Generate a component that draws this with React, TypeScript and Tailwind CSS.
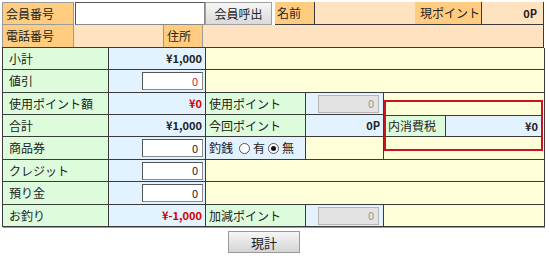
const orange = "bg-[#ffcc80]";
const peach = "bg-[#ffe3c0]";
const green = "bg-[#dcfcdc]";
const blue = "bg-[#e2f2fe]";
const yellow = "bg-[#fefed8]";
const cell = "border-r border-b border-[#3a3a3a] flex items-center";

function Input({ value, red }: { value: string; red?: boolean }) {
  return (
    <div
      className={`w-[61px] h-[18px] bg-white border border-[#8a8a8a] border-t-[#555] border-l-[#555] flex items-center justify-end pr-[4px] text-[11px] ${red ? "text-[#b4284a]" : "text-[#222]"}`}
    >
      {value}
    </div>
  );
}

function Disabled() {
  return (
    <div className="w-[61px] h-[18px] bg-[#e3e3e3] border border-[#b5b5b5] flex items-center justify-end pr-[4px] text-[11px] text-[#999]">
      0
    </div>
  );
}

function Radio({ on }: { on?: boolean }) {
  return (
    <span className="w-[11px] h-[11px] rounded-full border border-[#555] bg-white flex items-center justify-center">
      {on && <span className="w-[5px] h-[5px] rounded-full bg-[#111]" />}
    </span>
  );
}

export default function App() {
  return (
    <div className="w-[550px] h-[265px] bg-white pt-[2px] pl-[2px] text-[12px] text-[#222] font-['Noto_Sans_CJK_JP','Noto_Sans',sans-serif] leading-none">
      {/* 会員情報 */}
      <div className="w-[542px]">
        <div className="flex h-[23px]">
          <div className={`w-[72px] ${orange} border border-[#9a9a9a] flex items-center pl-[3px]`}>会員番号</div>
          <div className="w-[130px] ml-[1px] bg-white border border-[#8a8a8a] border-t-[#555] border-l-[#555]" />
          <div className="w-[67px] bg-gradient-to-b from-[#f6f6f6] to-[#dadada] border border-[#a0a0a0] flex items-center justify-center">
            会員呼出
          </div>
          <div className="w-[3px]" />
          <div className={`w-[40px] ${orange} border-b border-r border-[#3a3a3a] flex items-center pl-[2px]`}>名前</div>
          <div className={`w-[100px] ${peach} border-b border-[#3a3a3a]`} />
          <div className={`w-[67px] ${orange} border-b border-r border-[#3a3a3a] flex items-center pl-[5px]`}>現ポイント</div>
          <div className={`flex-1 ${peach} border-b border-r border-[#3a3a3a] flex items-center justify-end pr-[6px] font-bold text-[11px]`}>
            0P
          </div>
        </div>
        <div className="flex h-[22px]">
          <div className={`w-[72px] ${orange} border-x border-[#9a9a9a] flex items-center pl-[3px]`}>電話番号</div>
          <div className={`w-[89px] ${peach}`} />
          <div className={`w-[40px] ${orange} border-x border-[#9a9a9a] flex items-center pl-[3px]`}>住所</div>
          <div className={`flex-1 ${peach} border-r border-[#3a3a3a]`} />
        </div>
      </div>

      {/* 精算 */}
      <div className="w-[542px] grid grid-cols-[106px_97px_100px_78px_161px] grid-rows-[22px_23px_22px_22px_23px_22px_23px_22px] border-t border-l border-[#3a3a3a] shadow-[1px_1px_0_#9a9a9a]">
        <div className={`${cell} ${green} pl-[6px]`}>小計</div>
        <div className={`${cell} ${blue} justify-end pr-[3px] font-bold text-[11px]`}>¥1,000</div>
        <div className={`${cell} ${yellow} col-span-3`} />

        <div className={`${cell} ${green} pl-[6px]`}>値引</div>
        <div className={`${cell} ${blue} justify-end pr-[2px]`}>
          <Input value="0" red />
        </div>
        <div className={`${cell} ${yellow} col-span-3`} />

        <div className={`${cell} ${green} pl-[6px]`}>使用ポイント額</div>
        <div className={`${cell} ${blue} justify-end pr-[3px] font-bold text-[11px] text-[#d40000]`}>¥0</div>
        <div className={`${cell} ${green} pl-[3px]`}>使用ポイント</div>
        <div className={`${cell} ${blue} justify-end pr-[4px]`}>
          <Disabled />
        </div>
        <div className={`${cell} ${yellow} row-span-3 flex-col items-stretch justify-start pt-[7px] pr-[1px]`}>
          <div className="h-[51px] border-2 border-[#c8141e] flex flex-col">
            <div className="h-[13px]" />
            <div className="h-[22px] flex border-y border-[#3a3a3a]">
              <div className={`w-[60px] ${green} border-r border-[#3a3a3a] flex items-center pl-[2px]`}>内消費税</div>
              <div className={`flex-1 ${blue} flex items-center justify-end pr-[3px] font-bold text-[11px]`}>¥0</div>
            </div>
          </div>
        </div>

        <div className={`${cell} ${green} pl-[6px]`}>合計</div>
        <div className={`${cell} ${blue} justify-end pr-[3px] font-bold text-[11px]`}>¥1,000</div>
        <div className={`${cell} ${green} pl-[3px]`}>今回ポイント</div>
        <div className={`${cell} ${blue} justify-end pr-[3px] font-bold text-[11px]`}>0P</div>

        <div className={`${cell} ${green} pl-[6px]`}>商品券</div>
        <div className={`${cell} ${blue} justify-end pr-[2px]`}>
          <Input value="0" />
        </div>
        <div className={`${cell} ${blue} pl-[3px] gap-[3px]`}>
          <span>釣銭</span>
          <span className="ml-[3px]"><Radio /></span>
          <span>有</span>
          <Radio on />
          <span>無</span>
        </div>
        <div className={`${cell} ${yellow}`} />

        <div className={`${cell} ${green} pl-[6px]`}>クレジット</div>
        <div className={`${cell} ${blue} justify-end pr-[2px]`}>
          <Input value="0" />
        </div>
        <div className={`${cell} ${yellow} col-span-3`} />

        <div className={`${cell} ${green} pl-[6px]`}>預り金</div>
        <div className={`${cell} ${blue} justify-end pr-[2px]`}>
          <Input value="0" />
        </div>
        <div className={`${cell} ${yellow} col-span-3`} />

        <div className={`${cell} ${green} pl-[6px]`}>お釣り</div>
        <div className={`${cell} ${blue} justify-end pr-[3px] font-bold text-[11px] text-[#d40000]`}>¥-1,000</div>
        <div className={`${cell} ${green} pl-[3px]`}>加減ポイント</div>
        <div className={`${cell} ${blue} justify-end pr-[4px]`}>
          <Disabled />
        </div>
        <div className={`${cell} ${yellow}`} />
      </div>

      <div className="mt-[4px] ml-[226px] w-[72px] h-[22px] bg-gradient-to-b from-[#f6f6f6] to-[#d4d4d4] border border-[#999] flex items-center justify-center text-[13px]">
        現計
      </div>
    </div>
  );
}
